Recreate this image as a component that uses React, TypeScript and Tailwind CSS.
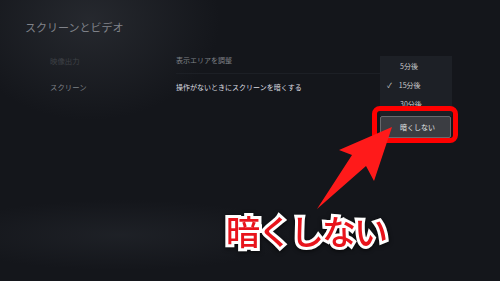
const jp = { fontFamily: '"Noto Sans CJK JP", "Noto Sans", sans-serif' };

function Arrow() {
  return (
    <svg
      className="absolute left-0 top-0 pointer-events-none"
      width="500"
      height="281"
      viewBox="0 0 500 281"
    >
      <polygon
        points="392,127 374,181 366,166 317,209 352,155 339,150"
        fill="#ff1a1a"
      />
    </svg>
  );
}

// the open select menu, with "暗くしない" focused
function Dropdown() {
  return (
    <div className="absolute left-[380px] top-[56px] w-[72px] flex flex-col text-[7px] text-[#c9cacc]">
      <div className="bg-[#1d2026] pt-[1px] pb-[2px]">
        <div className="h-[19px] flex items-center pl-[20px]">5分後</div>
        <div className="h-[19px] flex items-center gap-[7px] pl-[7px]">
          <span>✓</span>
          <span>15分後</span>
        </div>
        <div className="h-[19px] flex items-center pl-[20px]">30分後</div>
      </div>
      <div className="h-[22px] w-[71px] bg-[#3b3d42] border border-[#67696d] rounded-[2px] flex items-center pl-[19px] text-[#e4e5e7]">
        暗くしない
      </div>
    </div>
  );
}

export default function App() {
  return (
    <div
      className="relative w-[500px] h-[281px] overflow-hidden bg-[#14161b]"
      style={jp}
    >
      {/* soft lights of the console background */}
      <div className="absolute -left-[40px] -top-[80px] w-[260px] h-[200px] rounded-full bg-[radial-gradient(closest-side,#2a2d33,transparent)] opacity-80" />
      <div className="absolute -left-[60px] top-[200px] w-[360px] h-[70px] rounded-full bg-[radial-gradient(closest-side,#22252b,transparent)] opacity-70" />

      <div className="relative">
        <div className="pt-[20px] pl-[25px] text-[11px] leading-[14px] text-[#80838a]">
          スクリーンとビデオ
        </div>

        <div className="flex mt-[14px]">
          <div className="w-[176px] pl-[50px] text-[7.4px]">
            <div className="h-[26px] flex items-center text-[#3e4146]">映像出力</div>
            <div className="h-[26px] flex items-center text-[#7e8187]">スクリーン</div>
          </div>
          <div className="w-[204px] text-[7px]">
            <div className="h-[26px] flex items-center text-[#7f8288] border-b border-[#1c1f25]">
              表示エリアを調整
            </div>
            <div className="h-[26px] flex items-center text-[#dcdde0]">
              操作がないときにスクリーンを暗くする
            </div>
          </div>
        </div>
      </div>

      <Dropdown />

      {/* annotation overlay */}
      <div className="absolute left-[372px] top-[106px] w-[86px] h-[37px] border-[5px] border-[#ff0000] rounded-[8px]" />

      <Arrow />

      <div className="absolute left-[226px] top-[208px] text-[34px] leading-[46px] font-medium tracking-[-2px] text-[#e8141c] [paint-order:stroke_fill] [-webkit-text-stroke:6px_#ffffff] [filter:drop-shadow(0_1px_2px_rgba(0,0,0,0.7))]">
        暗くしない
      </div>
    </div>
  );
}
